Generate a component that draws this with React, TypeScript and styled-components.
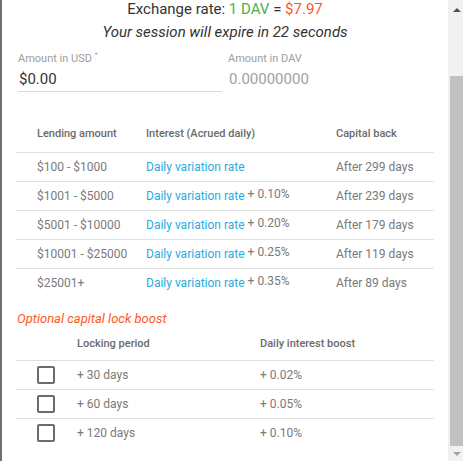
import styled, { createGlobalStyle } from "styled-components";

const GlobalStyle = createGlobalStyle`
  html, body {
    margin: 0;
    padding: 0;
    background: #6f6f6f;
    font-family: Roboto, "Liberation Sans", sans-serif;
  }
`;

const Backdrop = styled.div`
  height: 461px;
  padding-left: 2px;
  box-sizing: border-box;
  background: #707070;
`;

const Dialog = styled.div`
  display: flex;
  height: 461px;
  background: #fff;
  overflow: hidden;
`;

const Body = styled.div`
  flex: 1;
  min-width: 0;
  padding: 0 14px;
`;

/* window scrollbar, drawn at the bottom of its travel */
const ScrollBar = styled.div`
  width: 15px;
  display: flex;
  flex-direction: column;
  background: #f1f1f1;
`;

const ArrowButton = styled.div<{ $dir: "up" | "down"; $active?: boolean }>`
  height: 15px;
  box-sizing: border-box;
  display: flex;
  align-items: center;
  justify-content: center;
  padding: ${(p) => (p.$dir === "up" ? "4px 0 0 2px" : "0 0 0 2px")};
  &::after {
    content: "";
    width: 0;
    height: 0;
    border-left: 4px solid transparent;
    border-right: 4px solid transparent;
    ${(p) =>
      p.$dir === "up"
        ? `border-bottom: 4px solid ${p.$active ? "#505050" : "#a3a3a3"};`
        : `border-top: 4px solid ${p.$active ? "#505050" : "#a3a3a3"};`}
  }
`;

const Thumb = styled.div`
  flex: 1;
  margin: 61px 0 0 2px;
  background: #c1c1c1;
`;

const Rate = styled.div`
  text-align: center;
  font-size: 15px;
  line-height: 20px;
  margin-top: -1px;
  color: #333;
`;

const Colored = styled.span<{ $tone: "green" | "orange" }>`
  color: ${(p) => (p.$tone === "green" ? "#4caf50" : "#ff5722")};
`;

const Expiry = styled.div`
  text-align: center;
  font-size: 15px;
  font-style: italic;
  line-height: 20px;
  margin-top: 3px;
  color: #333;
`;

const Fields = styled.div`
  display: grid;
  grid-template-columns: 204px 1fr;
  column-gap: 6px;
  margin-top: 10px;
  padding-left: 2px;
`;

const Field = styled.div<{ $underline?: boolean }>`
  display: flex;
  flex-direction: column;
  border-bottom: 1px solid ${(p) => (p.$underline ? "#dcdcdc" : "transparent")};
`;

const Label = styled.label`
  font-size: 11px;
  line-height: 14px;
  color: #9e9e9e;
  sup {
    font-size: 7px;
    line-height: 0;
    vertical-align: 5px;
  }
`;

const Value = styled.div<{ $muted?: boolean }>`
  font-size: 15px;
  line-height: 20px;
  padding: 3px 0 2px 1px;
  color: ${(p) => (p.$muted ? "#a0a0a0" : "#333")};
`;

const Table = styled.table`
  width: 100%;
  table-layout: fixed;
  border-collapse: collapse;
  margin-top: 23px;
  font-size: 12px;
`;

const Th = styled.th<{ $width?: string; $height?: number }>`
  box-sizing: border-box;
  text-align: left;
  font-weight: 500;
  font-size: 11px;
  color: #6a6a6a;
  height: ${(p) => p.$height ?? 37}px;
  padding: 0 0 0 21px;
  width: ${(p) => p.$width ?? "auto"};
`;

const Td = styled.td`
  height: 28px;
  padding: 0 0 0 21px;
  color: #7a7a7a;
  border-top: 1px solid #e0e0e0;
  white-space: nowrap;
`;

const Link = styled.span`
  color: #29abe2;
`;

const Extra = styled.span`
  position: relative;
  top: -2px;
`;

const BoostTitle = styled.div`
  margin-top: 13px;
  padding-left: 1px;
  font-size: 13px;
  line-height: 17px;
  font-style: italic;
  color: #ff5722;
`;

const BoostTable = styled(Table)`
  margin-top: 0;
`;

const Checkbox = styled.span`
  display: block;
  width: 14px;
  height: 14px;
  border: 2px solid #6b6b6b;
  border-radius: 2px;
`;

const tiers = [
  { range: "$100 - $1000", extra: "", back: "After 299 days" },
  { range: "$1001 - $5000", extra: "+ 0.10%", back: "After 239 days" },
  { range: "$5001 - $10000", extra: "+ 0.20%", back: "After 179 days" },
  { range: "$10001 - $25000", extra: "+ 0.25%", back: "After 119 days" },
  { range: "$25001+", extra: "+ 0.35%", back: "After 89 days" },
];

const locks = [
  { period: "+ 30 days", boost: "+ 0.02%" },
  { period: "+ 60 days", boost: "+ 0.05%" },
  { period: "+ 120 days", boost: "+ 0.10%" },
];

export default function App() {
  return (
    <>
      <GlobalStyle />
      <Backdrop>
        <Dialog>
          <Body>
            <Rate>
              Exchange rate: <Colored $tone="green">1 DAV</Colored> ={" "}
              <Colored $tone="orange">$7.97</Colored>
            </Rate>
            <Expiry>Your session will expire in 22 seconds</Expiry>

            <Fields>
              <Field $underline>
                <Label>
                  Amount in USD <sup>*</sup>
                </Label>
                <Value>$0.00</Value>
              </Field>
              <Field>
                <Label>Amount in DAV</Label>
                <Value $muted>0.00000000</Value>
              </Field>
            </Fields>

            <Table>
              <thead>
                <tr>
                  <Th $width="109px">Lending amount</Th>
                  <Th $width="190px">Interest (Acrued daily)</Th>
                  <Th>Capital back</Th>
                </tr>
              </thead>
              <tbody>
                {tiers.map((t) => (
                  <tr key={t.range}>
                    <Td>{t.range}</Td>
                    <Td>
                      <Link>Daily variation rate</Link>
                      {t.extra && <Extra> {t.extra}</Extra>}
                    </Td>
                    <Td>{t.back}</Td>
                  </tr>
                ))}
              </tbody>
            </Table>

            <BoostTitle>Optional capital lock boost</BoostTitle>

            <BoostTable>
              <thead>
                <tr>
                  <Th $width="40px" $height={34} />
                  <Th $width="183px" $height={34}>
                    Locking period
                  </Th>
                  <Th $height={34}>Daily interest boost</Th>
                </tr>
              </thead>
              <tbody>
                {locks.map((l) => (
                  <tr key={l.period}>
                    <Td>
                      <Checkbox />
                    </Td>
                    <Td>{l.period}</Td>
                    <Td>{l.boost}</Td>
                  </tr>
                ))}
              </tbody>
            </BoostTable>
          </Body>

          <ScrollBar>
            <ArrowButton $dir="up" $active />
            <Thumb />
            <ArrowButton $dir="down" />
          </ScrollBar>
        </Dialog>
      </Backdrop>
    </>
  );
}
